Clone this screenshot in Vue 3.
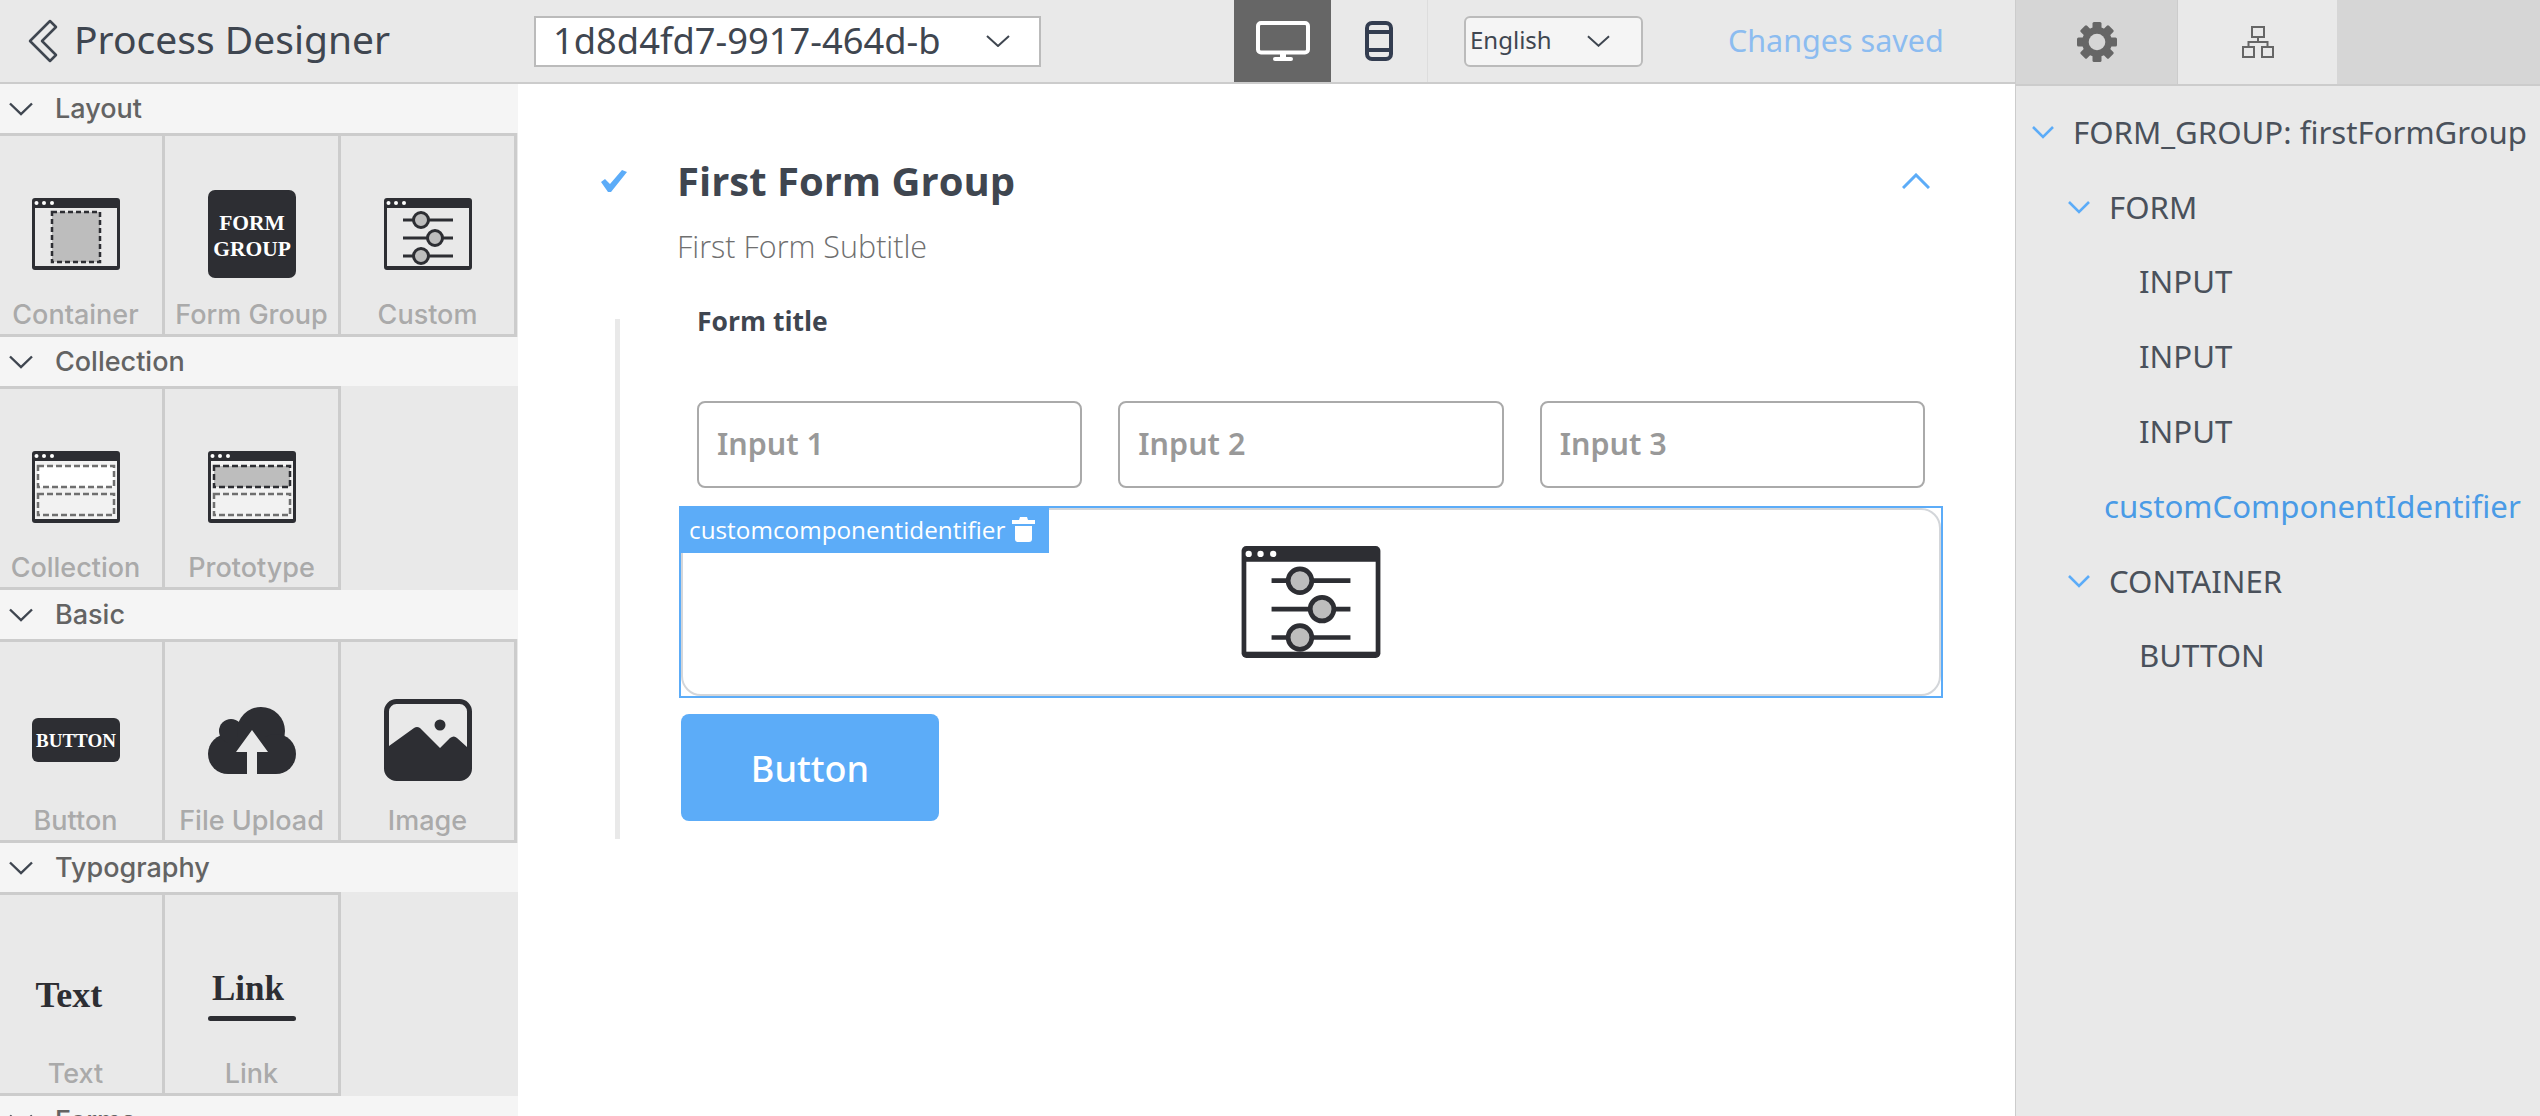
<script setup>
const groups = [
  { title: 'Layout', items: [
    { label: 'Container', icon: 'container' },
    { label: 'Form Group', icon: 'formgroup' },
    { label: 'Custom', icon: 'custom' }
  ] },
  { title: 'Collection', items: [
    { label: 'Collection', icon: 'collection' },
    { label: 'Prototype', icon: 'prototype' }
  ] },
  { title: 'Basic', items: [
    { label: 'Button', icon: 'button' },
    { label: 'File Upload', icon: 'upload' },
    { label: 'Image', icon: 'image' }
  ] },
  { title: 'Typography', items: [
    { label: 'Text', icon: 'text' },
    { label: 'Link', icon: 'link' }
  ] },
  { title: 'Forms', items: [] }
]

const inputs = ['Input 1', 'Input 2', 'Input 3']

const tree = [
  { label: 'FORM_GROUP: firstFormGroup', indent: 16, open: true },
  { label: 'FORM', indent: 52, open: true },
  { label: 'INPUT', indent: 123 },
  { label: 'INPUT', indent: 123 },
  { label: 'INPUT', indent: 123 },
  { label: 'customComponentIdentifier', indent: 88, active: true },
  { label: 'CONTAINER', indent: 52, open: true },
  { label: 'BUTTON', indent: 123 }
]

const gearTeeth = [0, 45, 90, 135]
</script>

<template>
  <div class="app">
    <div class="left">
      <header class="topbar">
        <div class="brand">
          <svg class="back" viewBox="0 0 30 44" fill="none" stroke="#3f4650" stroke-width="2.5" stroke-linejoin="round">
            <path d="M22 2 L2 22 L22 42 L28 36 L14 22 L28 8 Z" />
          </svg>
          <span>Process Designer</span>
        </div>
        <div class="select process">
          <span>1d8d4fd7-9917-464d-b</span>
          <svg class="sel-arrow" viewBox="0 0 24 12" fill="none" stroke="#3f4650" stroke-width="2"><path d="M1 1 L12 11 L23 1" /></svg>
        </div>
        <div class="devices">
          <button class="device on">
            <svg width="54" height="40" viewBox="0 0 54 40">
              <rect x="2" y="2" width="50" height="29.5" rx="3" fill="none" stroke="#fff" stroke-width="4" />
              <rect x="24" y="33" width="6" height="3" fill="#fff" />
              <rect x="17" y="36" width="20" height="4" rx="2" fill="#fff" />
            </svg>
          </button>
          <button class="device">
            <svg width="28" height="40" viewBox="0 0 28 40">
              <rect x="2" y="2" width="24" height="36" rx="5" fill="none" stroke="#333d50" stroke-width="4" />
              <rect x="2" y="9" width="24" height="4" fill="#333d50" />
              <rect x="2" y="27" width="24" height="4" fill="#333d50" />
            </svg>
          </button>
        </div>
        <div class="select lang">
          <span>English</span>
          <svg class="lang-arrow" viewBox="0 0 24 12" fill="none" stroke="#3f4650" stroke-width="2"><path d="M1 1 L12 11 L23 1" /></svg>
        </div>
        <div class="saved">Changes saved</div>
      </header>

      <div class="work">
        <aside class="palette">
          <section v-for="g in groups" :key="g.title">
            <h3 class="group-head">
              <svg class="caret" viewBox="0 0 24 14" fill="none" stroke="#3f4650" stroke-width="2.4"><path d="M1 1.5 L12 12 L23 1.5" /></svg>
              {{ g.title }}
            </h3>
            <div class="cells">
              <div v-for="item in g.items" :key="item.label" class="cell">
                <div class="cell-icon">
                  <svg v-if="item.icon === 'container'" width="88" height="72" viewBox="0 0 88 72">
                    <rect width="88" height="72" rx="3" fill="#2d2e33" />
                    <rect x="3" y="10" width="82" height="58" fill="#e9e9e9" />
                    <circle cx="4.5" cy="5" r="2" fill="#fff" /><circle cx="12" cy="5" r="2" fill="#fff" /><circle cx="20" cy="5" r="2" fill="#fff" />
                    <rect x="20" y="14" width="48" height="50" fill="#bdbdbd" stroke="#2d2e33" stroke-width="2.5" stroke-dasharray="5 3" />
                  </svg>
                  <svg v-else-if="item.icon === 'formgroup'" width="88" height="88" viewBox="0 0 88 88">
                    <rect width="88" height="88" rx="7" fill="#2d2e33" />
                    <text x="44" y="40" class="serif" font-size="21.5" text-anchor="middle" fill="#fff">FORM</text>
                    <text x="44" y="66" class="serif" font-size="21.5" text-anchor="middle" fill="#fff">GROUP</text>
                  </svg>
                  <svg v-else-if="item.icon === 'custom'" width="88" height="72" viewBox="0 0 88 72">
                    <rect width="88" height="72" rx="3" fill="#2d2e33" />
                    <rect x="3" y="10" width="82" height="58" fill="#e9e9e9" />
                    <circle cx="4.5" cy="5" r="2" fill="#fff" /><circle cx="12" cy="5" r="2" fill="#fff" /><circle cx="20" cy="5" r="2" fill="#fff" />
                    <g stroke="#2d2e33" stroke-width="3">
                      <path d="M19 22 H69 M19 40 H69 M19 58 H69" />
                      <circle cx="37" cy="22" r="7.5" fill="#bdbdbd" />
                      <circle cx="51" cy="40" r="7.5" fill="#bdbdbd" />
                      <circle cx="37" cy="58" r="7.5" fill="#bdbdbd" />
                    </g>
                  </svg>
                  <svg v-else-if="item.icon === 'collection'" width="88" height="72" viewBox="0 0 88 72">
                    <rect width="88" height="72" rx="3" fill="#2d2e33" />
                    <rect x="3" y="10" width="82" height="58" fill="#f2f2f2" />
                    <circle cx="4.5" cy="5" r="2" fill="#fff" /><circle cx="12" cy="5" r="2" fill="#fff" /><circle cx="20" cy="5" r="2" fill="#fff" />
                    <rect x="6" y="15" width="76" height="21" fill="#fff" stroke="#6f6f6f" stroke-width="2.5" stroke-dasharray="6 3" />
                    <rect x="6" y="43" width="76" height="21" fill="none" stroke="#6f6f6f" stroke-width="2.5" stroke-dasharray="6 3" />
                  </svg>
                  <svg v-else-if="item.icon === 'prototype'" width="88" height="72" viewBox="0 0 88 72">
                    <rect width="88" height="72" rx="3" fill="#2d2e33" />
                    <rect x="3" y="10" width="82" height="58" fill="#f2f2f2" />
                    <circle cx="4.5" cy="5" r="2" fill="#fff" /><circle cx="12" cy="5" r="2" fill="#fff" /><circle cx="20" cy="5" r="2" fill="#fff" />
                    <rect x="6" y="15" width="76" height="21" fill="#bdbdbd" stroke="#2d2e33" stroke-width="2.5" stroke-dasharray="6 3" />
                    <rect x="6" y="43" width="76" height="21" fill="none" stroke="#6f6f6f" stroke-width="2.5" stroke-dasharray="6 3" />
                  </svg>
                  <svg v-else-if="item.icon === 'button'" width="88" height="44" viewBox="0 0 88 44">
                    <rect width="88" height="44" rx="6" fill="#2d2e33" />
                    <text x="44" y="29" class="serif" font-size="19" text-anchor="middle" fill="#fff">BUTTON</text>
                  </svg>
                  <svg v-else-if="item.icon === 'upload'" width="88" height="67" viewBox="0 0 88 67">
                    <g fill="#2d2e33">
                      <circle cx="20" cy="47" r="20" /><circle cx="23" cy="24" r="12" /><circle cx="53" cy="24" r="24" /><circle cx="68" cy="47" r="20" />
                      <rect x="20" y="30" width="48" height="37" />
                    </g>
                    <path d="M44 23 L60 45 H49 V67 H39 V45 H28 Z" fill="#e9e9e9" />
                  </svg>
                  <svg v-else-if="item.icon === 'image'" width="88" height="82" viewBox="0 0 88 82">
                    <rect x="2.5" y="2.5" width="83" height="77" rx="10" fill="#e9e9e9" stroke="#2d2e33" stroke-width="5" />
                    <circle cx="56" cy="26" r="5.5" fill="#2d2e33" />
                    <path d="M5 47 L30 29 Q33 27 36 29 L56 49 L66 39 Q70 36 73 39 L83 48 V72 Q83 80 75 80 H13 Q5 80 5 72 Z" fill="#2d2e33" />
                  </svg>
                  <svg v-else-if="item.icon === 'text'" width="88" height="50" viewBox="0 0 88 50">
                    <text x="3.5" y="39" class="serif" font-size="36" fill="#2d2e33">Text</text>
                  </svg>
                  <svg v-else-if="item.icon === 'link'" width="88" height="60" viewBox="0 0 88 60">
                    <text x="4" y="37" class="serif" font-size="35" fill="#2d2e33">Link</text>
                    <rect y="53" width="88" height="5" rx="2.5" fill="#2d2e33" />
                  </svg>
                </div>
                <div class="cell-label">{{ item.label }}</div>
              </div>
            </div>
          </section>
        </aside>

        <main class="canvas">
          <div class="group-title">
            <svg class="check" viewBox="0 0 27 22"><path d="M1 12 L5 9 L10 14 L22 0 L27 2 L11 22 H8 Z" fill="#5cacf8" /></svg>
            <div class="heading">
              <h1>First Form Group</h1>
              <p>First Form Subtitle</p>
            </div>
            <svg class="up" viewBox="0 0 28 16" fill="none" stroke="#5cacf8" stroke-width="3"><path d="M1 15 L14 2 L27 15" /></svg>
          </div>

          <div class="form">
            <div class="form-title">Form title</div>
            <div class="inputs">
              <input v-for="p in inputs" :key="p" class="field" :placeholder="p" />
            </div>
            <div class="custom-box">
              <div class="custom-inner">
                <svg width="140" height="112" viewBox="0 0 88 71">
                  <rect width="88" height="71" rx="3" fill="#2d2e33" />
                  <rect x="3" y="10" width="82" height="57" fill="#fff" />
                  <circle cx="4.5" cy="5" r="2" fill="#fff" /><circle cx="12" cy="5" r="2" fill="#fff" /><circle cx="20" cy="5" r="2" fill="#fff" />
                  <g stroke="#2d2e33" stroke-width="3">
                    <path d="M19 22 H69 M19 40 H69 M19 58 H69" />
                    <circle cx="37" cy="22" r="7.5" fill="#bdbdbd" />
                    <circle cx="51" cy="40" r="7.5" fill="#bdbdbd" />
                    <circle cx="37" cy="58" r="7.5" fill="#bdbdbd" />
                  </g>
                </svg>
              </div>
              <div class="tag">
                <span>customcomponentidentifier</span>
                <svg width="23" height="25" viewBox="0 0 23 25" fill="#fff">
                  <path d="M8 0 H15 L16 3 H23 V7 H0 V3 H7 Z" />
                  <path d="M3 9 H20 V22 Q20 25 17 25 H6 Q3 25 3 22 Z" />
                </svg>
              </div>
            </div>
            <button class="submit">Button</button>
          </div>
        </main>
      </div>
    </div>

    <aside class="inspector">
      <div class="tabs">
        <div class="tab">
          <svg width="40" height="40" viewBox="0 0 40 40">
            <rect v-for="a in gearTeeth" :key="a" x="15.5" y="0" width="9" height="40" rx="1.5" fill="#666" :transform="`rotate(${a} 20 20)`" />
            <circle cx="20" cy="20" r="15" fill="#666" />
            <circle cx="20" cy="20" r="8.3" fill="#d6d6d6" />
          </svg>
        </div>
        <div class="tab on">
          <svg width="32" height="32" viewBox="0 0 32 32" fill="none" stroke="#666" stroke-width="2">
            <rect x="10" y="1" width="12" height="10" />
            <path d="M16 11 V16 M6.5 21 V16 H25.5 V21" />
            <rect x="1" y="21" width="11" height="10" />
            <rect x="20" y="21" width="11" height="10" />
          </svg>
        </div>
      </div>
      <ul class="tree">
        <li v-for="(row, i) in tree" :key="i" class="row" :class="{ active: row.active }" :style="{ paddingLeft: row.indent + 'px' }">
          <svg v-if="row.open" class="tree-caret" viewBox="0 0 22 14" fill="none" stroke="#5cacf8" stroke-width="2.6"><path d="M1 2 L11 12 L21 2" /></svg>
          <span>{{ row.label }}</span>
        </li>
      </ul>
    </aside>
  </div>
</template>

<style scoped>
.app {
  display: flex;
  height: 100vh;
  overflow: hidden;
  font-family: "Noto Sans", sans-serif;
  color: #3f4650;
  background: #fff;
}
.left {
  flex: 1;
  min-width: 0;
  display: flex;
  flex-direction: column;
}
.topbar {
  height: 84px;
  box-sizing: border-box;
  display: flex;
  align-items: center;
  background: #e9e9e9;
  border-bottom: 2px solid #ccc;
  flex-shrink: 0;
}
.brand {
  width: 534px;
  box-sizing: border-box;
  padding-left: 28px;
  display: flex;
  align-items: center;
  gap: 16px;
  font-size: 39px;
}
.brand span {
  padding-bottom: 5px;
}
.back {
  width: 30px;
  height: 44px;
}
.select {
  box-sizing: border-box;
  height: 51px;
  display: flex;
  align-items: center;
  border: 2px solid #bbb;
}
.process {
  width: 507px;
  background: #fff;
  padding-left: 17px;
  font-size: 36.3px;
}
.process span {
  padding-bottom: 2px;
}
.sel-arrow {
  width: 24px;
  height: 12px;
  margin-left: 45px;
}
.devices {
  margin-left: 193px;
  display: flex;
  height: 82px;
}
.device {
  width: 97px;
  padding: 0;
  border: 0;
  background: none;
  display: flex;
  align-items: center;
  justify-content: center;
}
.device + .device {
  border-right: 1px solid #ddd;
}
.device.on {
  background: #666;
}
.lang {
  margin-left: 36px;
  width: 179px;
  background: #f5f5f5;
  border-radius: 6px;
  padding-left: 4px;
  font-size: 24px;
}
.lang span {
  padding-bottom: 4px;
}
.lang-arrow {
  width: 23px;
  height: 12px;
  margin-left: 35px;
}
.saved {
  margin-left: 85px;
  font-size: 30.5px;
  color: #8cbcf0;
  padding-bottom: 3px;
}

.work {
  flex: 1;
  min-height: 0;
  display: flex;
}
.palette {
  width: 518px;
  flex-shrink: 0;
  background: #e9e9e9;
  overflow: hidden;
}
.group-head {
  margin: 0;
  height: 49px;
  background: #f5f5f5;
  display: flex;
  align-items: center;
  gap: 22px;
  padding-left: 9px;
  font-family: Inter, sans-serif;
  font-size: 27px;
  font-weight: 500;
  color: #636363;
}
.caret {
  width: 24px;
  height: 14px;
}
.cells {
  height: 204px;
  margin-left: -11px;
  display: grid;
  grid-template-columns: repeat(3, 176px);
}
.cell {
  box-sizing: border-box;
  border: 3px solid #ccc;
  border-left: 0;
  padding-top: 54px;
  display: flex;
  flex-direction: column;
  align-items: center;
}
.cell-icon {
  height: 88px;
  flex-shrink: 0;
  display: flex;
  align-items: center;
  justify-content: center;
}
.cell-label {
  margin-top: 21px;
  font-family: Inter, sans-serif;
  font-size: 27px;
  font-weight: 500;
  line-height: 32px;
  color: #aaa;
}
.serif {
  font-family: "Liberation Serif", serif;
  font-weight: 700;
}

.canvas {
  flex: 1;
  min-width: 0;
  padding: 69px 72px 0 82px;
}
.group-title {
  display: flex;
  align-items: flex-start;
}
.check {
  width: 27px;
  height: 22px;
  margin-top: 17px;
  flex-shrink: 0;
}
.heading {
  flex: 1;
  margin-left: 50px;
}
.heading h1 {
  margin: 0;
  font-family: "Open Sans", sans-serif;
  font-size: 40px;
  font-weight: 700;
  line-height: 56px;
}
.heading p {
  margin: 17px 0 0;
  font-family: "Open Sans", sans-serif;
  font-size: 30.5px;
  font-weight: 300;
  line-height: 40px;
  color: #6f6f6f;
}
.up {
  width: 28px;
  height: 16px;
  margin: 20px 13px 0 0;
}
.form {
  display: flow-root;
  margin: 53px 0 0 15px;
  padding: 0 0 18px 59px;
  border-left: 5px solid #e9e9e9;
}
.form-title {
  margin: -16px 0 0 18px;
  font-family: "Open Sans", sans-serif;
  font-size: 26.5px;
  font-weight: 700;
  line-height: 36px;
}
.inputs {
  margin: 62px 18px 0 18px;
  display: grid;
  grid-template-columns: repeat(3, 1fr);
  gap: 36px;
}
.field {
  box-sizing: border-box;
  height: 87px;
  width: 100%;
  border: 2px solid #aaa;
  border-radius: 8px;
  padding: 0 18px 3px;
  font-family: "Noto Sans", sans-serif;
  font-size: 30.5px;
  outline: none;
  background: #fff;
}
.field::placeholder {
  color: #999;
  font-weight: 600;
  opacity: 1;
}
.custom-box {
  position: relative;
  margin-top: 18px;
  box-sizing: border-box;
  height: 192px;
  border: 2px solid #5cacf8;
}
.custom-inner {
  height: 100%;
  box-sizing: border-box;
  border: 2px solid #d3d6da;
  border-radius: 20px;
  display: flex;
  align-items: center;
  justify-content: center;
}
.tag {
  position: absolute;
  left: -2px;
  top: -2px;
  height: 47px;
  width: 370px;
  box-sizing: border-box;
  background: #5cacf8;
  color: #fff;
  padding-left: 10px;
  display: flex;
  align-items: center;
  gap: 7px;
  font-size: 24.3px;
  font-family: "Open Sans", sans-serif;
}
.submit {
  display: block;
  margin: 16px 0 0 2px;
  padding: 2px 0 0;
  width: 258px;
  height: 107px;
  border: 0;
  border-radius: 8px;
  background: #5cacf8;
  color: #fff;
  font-family: "Noto Sans", sans-serif;
  font-size: 36px;
  font-weight: 500;
}

.inspector {
  width: 525px;
  flex-shrink: 0;
  box-sizing: border-box;
  border-left: 1px solid #ccc;
  background: #e9e9e9;
}
.tabs {
  display: flex;
  height: 86px;
  background: #d6d6d6;
  border-bottom: 2px solid #ccc;
  box-sizing: border-box;
}
.tab {
  width: 161px;
  display: flex;
  align-items: center;
  justify-content: center;
}
.tab.on {
  width: 160px;
  height: 84px;
  background: #e9e9e9;
  border-left: 1px solid #ccc;
  box-sizing: border-box;
}
.tree {
  list-style: none;
  margin: 0;
  padding: 8.5px 0 0;
}
.row {
  height: 74.8px;
  display: flex;
  align-items: center;
  gap: 19px;
  font-size: 31.2px;
  white-space: nowrap;
  color: #4a515b;
}
.row.active {
  color: #4a9be6;
}
.tree-caret {
  width: 22px;
  height: 14px;
}
</style>

<style>
html, body {
  margin: 0;
  overflow: hidden;
}
</style>
